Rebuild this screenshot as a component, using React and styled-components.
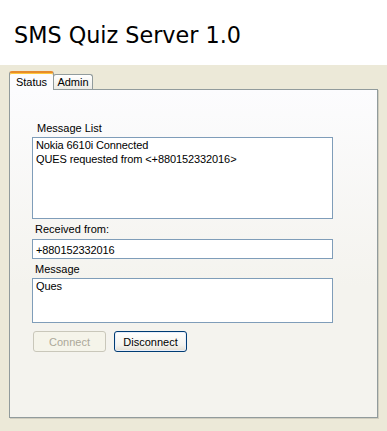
import React from "react";
import styled, { createGlobalStyle } from "styled-components";

const GlobalStyle = createGlobalStyle`
  html, body {
    margin: 0;
    padding: 0;
    background: #ece9d8;
  }
  body {
    font-family: "Liberation Sans", Arial, sans-serif;
    font-size: 11px;
    color: #000;
  }
`;

const Window = styled.div`
  width: 387px;
  height: 431px;
  display: flex;
  flex-direction: column;
  background: #ece9d8;
`;

const Header = styled.header`
  height: 65px;
  box-sizing: border-box;
  padding: 22px 0 0 14px;
  background: #fff;

  h1 {
    margin: 0;
    font-family: "DejaVu Sans", Verdana, sans-serif;
    font-weight: normal;
    font-size: 22.3px;
    line-height: 26px;
    color: #000;
  }
`;

const Body = styled.div`
  flex: 1;
  padding: 6px 9px 13px 9px;
  display: flex;
  flex-direction: column;
`;

const TabStrip = styled.div`
  display: flex;
  align-items: flex-end;
  height: 18px;
  position: relative;
  z-index: 1;
`;

const Tab = styled.div`
  box-sizing: border-box;
  display: flex;
  justify-content: center;
  font-size: 11px;
  border: 1px solid #919b9c;
  border-bottom: none;
  border-radius: 3px 3px 0 0;
  ${(p) =>
    p.$active
      ? `
    width: 45px;
    height: 19px;
    margin-bottom: -1px;
    padding-top: 3px;
    background: #fcfcfe;
    border-top: 2px solid #e68b2c;
    box-shadow: inset 0 1px 0 #ffc83c;
  `
      : `
    width: 40px;
    height: 15px;
    margin-left: -1px;
    padding-top: 1px;
    background: linear-gradient(#ffffff, #ecebe5);
  `}
`;

const Panel = styled.div`
  box-sizing: border-box;
  flex: 1;
  border: 1px solid #919b9c;
  box-shadow: 1px 1px 0 #d0cdbf;
  background: linear-gradient(#fcfcfe, #f4f3ee 60%, #f4f3ee);
  padding: 31px 0 0 22px;
  display: flex;
  flex-direction: column;
`;

const Label = styled.div`
  line-height: 14px;
  height: 14px;
  margin: ${(p) => p.$top || 0}px 0 ${(p) => p.$bottom || 2}px ${(p) => p.$indent || 3}px;
`;

const TextBox = styled.div`
  box-sizing: border-box;
  width: 301px;
  height: ${(p) => p.$h}px;
  border: 1px solid #7f9db9;
  background: #fff;
  padding: ${(p) => (p.$single ? "3px 3px 0" : "0 3px")};
  line-height: 14px;
  letter-spacing: -0.1px;
  white-space: pre;
  overflow: hidden;
`;

const ButtonRow = styled.div`
  display: flex;
  gap: 8px;
  margin: 8px 0 0 1px;
`;

const Button = styled.button`
  box-sizing: border-box;
  width: 73px;
  height: 21px;
  padding: 0;
  font-family: "Liberation Sans", Arial, sans-serif;
  font-size: 11px;
  border-radius: 3px;
  ${(p) =>
    p.disabled
      ? `
    border: 1px solid #c9c7ba;
    background: #f5f4ea;
    color: #aca899;
  `
      : `
    border: 1px solid #003c74;
    background: linear-gradient(#ffffff, #f4f3ee 70%, #e3ded3);
    color: #000;
    box-shadow: inset 0 0 0 1px #e8eefa;
  `}
`;

export default function App() {
  return (
    <Window>
      <GlobalStyle />
      <Header>
        <h1>SMS Quiz Server 1.0</h1>
      </Header>
      <Body>
        <TabStrip>
          <Tab $active>Status</Tab>
          <Tab>Admin</Tab>
        </TabStrip>
        <Panel>
          <Label $indent={5} $bottom={2}>Message List</Label>
          <TextBox $h={82}>
            {"Nokia 6610i Connected\nQUES requested from <+880152332016>"}
          </TextBox>
          <Label $top={3} $bottom={3}>Received from:</Label>
          <TextBox $h={20} $single>
            +880152332016
          </TextBox>
          <Label $top={3} $bottom={2}>Message</Label>
          <TextBox $h={45}>Ques</TextBox>
          <ButtonRow>
            <Button disabled>Connect</Button>
            <Button>Disconnect</Button>
          </ButtonRow>
        </Panel>
      </Body>
    </Window>
  );
}
